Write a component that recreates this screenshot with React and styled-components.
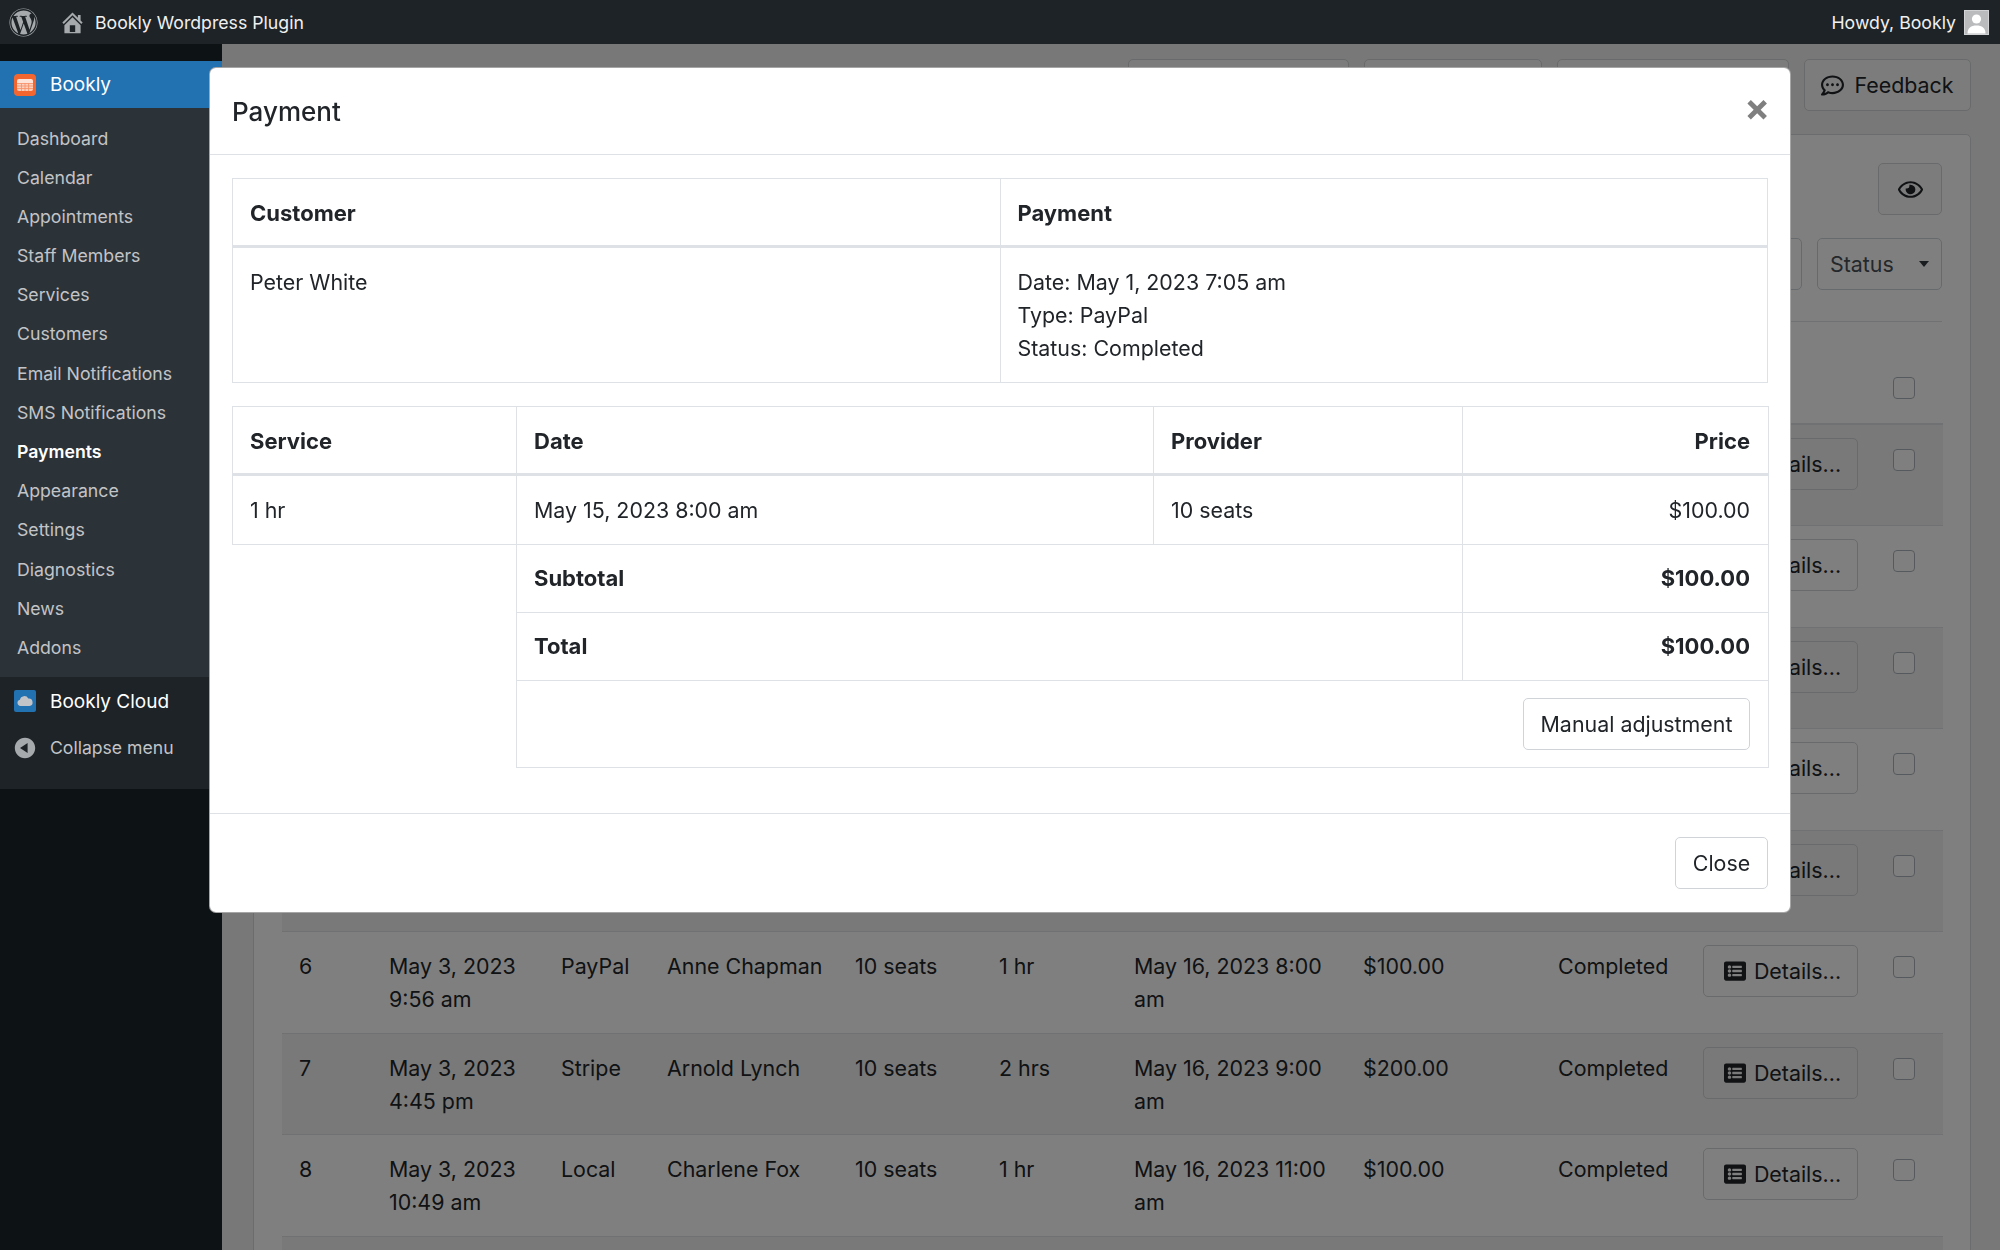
import React from "react";
import styled, { createGlobalStyle } from "styled-components";
import { FaWordpress, FaRegEye, FaRegCommentDots, FaListAlt } from "react-icons/fa";

const FONT = `Inter, "Liberation Sans", sans-serif`;
const TEXT = "#212529";
const LINE = "#dee2e6";

const Global = createGlobalStyle`
  html, body {
    margin: 0;
    width: 2000px;
    height: 1250px;
    overflow: hidden;
    background: #f0f0f1;
    font-family: ${FONT};
    color: ${TEXT};
  }
  * { box-sizing: border-box; }
`;

const Shell = styled.div`
  width: 2000px;
  height: 1250px;
  display: flex;
  flex-direction: column;
  overflow: hidden;
`;

const AdminBar = styled.header`
  flex: 0 0 44px;
  display: flex;
  align-items: center;
  padding: 0 11px 0 9px;
  background: #1d2327;
  color: #f0f0f1;
  font-size: 17.7px;
  position: relative;
  z-index: 3;
`;

const BarIcon = styled.span`
  display: flex;
  color: #a7aaad;
  margin-right: ${(p) => p.$gap}px;
`;

const Howdy = styled.span`
  margin-left: auto;
  margin-right: 8px;
`;

const Columns = styled.div`
  flex: 1;
  display: flex;
  min-height: 0;
`;

const Sidebar = styled.nav`
  flex: 0 0 222px;
  padding-top: 17px;
  background: #0d1214;
  position: relative;
  z-index: 2;
`;

const TopItem = styled.div`
  height: ${(p) => (p.$muted ? 46 : 47)}px;
  display: flex;
  align-items: center;
  gap: 14px;
  padding-left: 14px;
  font-size: ${(p) => (p.$muted ? "17.6px" : "19px")};
  color: ${(p) => (p.$muted ? "#c3c4c7" : "#fff")};
  background: ${(p) => (p.$active ? "#2271b1" : "transparent")};
`;

const SubMenu = styled.ul`
  list-style: none;
  margin: 0;
  padding: 10.5px 0 9.5px;
  background: #2c3338;
`;

const SubItem = styled.li`
  height: 39.2px;
  line-height: 39.2px;
  padding-left: 17px;
  font-size: 17.7px;
  color: ${(p) => (p.$current ? "#fff" : "#c3c4c7")};
  font-weight: ${(p) => (p.$current ? 600 : 400)};
`;

const CloudBlock = styled.div`
  background: #1d2327;
  padding: 1px 0 18px;
`;

const Main = styled.main`
  flex: 1;
  min-width: 0;
  padding: 15px 29px 0 31px;
  background: #f0f0f1;
`;

const PageHead = styled.div`
  display: flex;
  justify-content: flex-end;
  gap: 15px;
  margin-bottom: 23px;
`;

const Button = styled.button`
  height: 52px;
  display: inline-flex;
  align-items: center;
  justify-content: center;
  gap: ${(p) => p.$gap || 10}px;
  padding: 0 18px;
  background: #fff;
  border: 1px solid #d0d4d8;
  border-radius: 5px;
  font-family: ${FONT};
  font-size: 21.4px;
  color: ${TEXT};
  white-space: nowrap;

  svg {
    flex: none;
  }
`;

const HeadButton = styled(Button)`
  width: ${(p) => p.$w}px;
  padding: 0;
  background: #f8f9fa;
  flex: none;
`;

const Card = styled.section`
  height: 1200px;
  padding: 28px 28px 0 28px;
  background: #fff;
  border: 1px solid #d5d8db;
  border-radius: 5px 5px 0 0;
`;

const EyeRow = styled.div`
  display: flex;
  justify-content: flex-end;
  margin-bottom: 23px;
`;

const EyeButton = styled(Button)`
  width: 64px;
  padding: 0;
  font-size: 25px;
  background: #f8f9fa;
`;

const Filters = styled.div`
  display: flex;
  justify-content: flex-end;
  gap: 15px;
  padding-bottom: 31px;
  border-bottom: 1px solid ${LINE};
`;

const FilterBox = styled.div`
  width: ${(p) => p.$w}px;
  height: 52px;
  display: flex;
  align-items: center;
  justify-content: space-between;
  padding: 0 12px;
  background: #fff;
  border: 1px solid #ced4da;
  border-radius: 5px;
  font-size: 21.4px;
  color: #495057;
`;

const Caret = styled.i`
  width: 0;
  height: 0;
  border-left: 5px solid transparent;
  border-right: 5px solid transparent;
  border-top: 6px solid #343a40;
`;

const DataTable = styled.table`
  width: 1661px;
  table-layout: fixed;
  border-collapse: collapse;
  font-size: 21.4px;

  th {
    height: 102px;
    padding: 0 17px 24px;
    text-align: left;
    vertical-align: bottom;
    font-weight: 700;
    border-bottom: 2px solid ${LINE};
  }

  td {
    height: 101.55px;
    padding: 18px 8px 0 17px;
    line-height: 33px;
    vertical-align: top;
    border-bottom: 1px solid ${LINE};
  }

  tbody tr:nth-child(odd) td {
    background: #f2f2f2;
  }
`;

const DetailsButton = styled(Button)`
  width: 155px;
  margin-top: -5px;
  padding: 0 0 0 4px;
  background: transparent;
  vertical-align: top;
`;

const Check = styled.span`
  display: block;
  width: 22px;
  height: 22px;
  margin-top: ${(p) => (p.$head ? 0 : 6)}px;
  border: 1px solid #adb5bd;
  border-radius: 4px;
  background: #fff;
`;

const Backdrop = styled.div`
  position: fixed;
  inset: 44px 0 0 222px;
  background: rgba(0, 0, 0, 0.5);
  z-index: 1;
`;

const Modal = styled.div`
  position: fixed;
  left: 209px;
  top: 67px;
  width: 1582px;
  background: #fff;
  border: 1px solid rgba(0, 0, 0, 0.35);
  border-radius: 7px;
  z-index: 4;
`;

const ModalHead = styled.div`
  height: 87px;
  display: flex;
  align-items: center;
  justify-content: space-between;
  padding: 0 20px 0 22px;
  border-bottom: 1px solid ${LINE};
`;

const ModalTitle = styled.h5`
  margin: 0;
  font-size: 26px;
  font-weight: 500;
`;

const CloseX = styled.span`
  font-size: 38px;
  line-height: 1;
  font-weight: 700;
  color: #7f7f7f;
  margin-top: -8px;
`;

const ModalBody = styled.div`
  padding: 23px 22px 45px;
  display: flex;
  flex-direction: column;
  gap: 23px;
`;

const InfoTable = styled.table`
  width: 1536px;
  table-layout: fixed;
  border-collapse: collapse;
  font-size: 21.4px;
  line-height: 33px;

  th, td {
    padding: 17px;
    border: 1px solid ${LINE};
    text-align: left;
    vertical-align: top;
  }

  th {
    padding: 18px 17px 15px;
    font-size: 22px;
    font-weight: 700;
    border-bottom-width: 3px;
  }

  tbody tr:first-child td {
    padding-top: 18px;
    padding-bottom: 17px;
  }

  b {
    font-size: 22px;
  }

  th.num, td.num {
    padding-right: 18px;
    text-align: right;
  }

  td.blank {
    border: 0;
  }
`;

const ModalFoot = styled.div`
  display: flex;
  justify-content: flex-end;
  padding: 23px 22px;
  border-top: 1px solid ${LINE};
`;

const PlainButton = styled(Button)`
  width: ${(p) => p.$w}px;
  padding: 0;
  background: #fff;
`;

const Adjust = styled.div`
  display: flex;
  justify-content: flex-end;
`;

const menu = [
  "Dashboard", "Calendar", "Appointments", "Staff Members", "Services",
  "Customers", "Email Notifications", "SMS Notifications", "Payments",
  "Appearance", "Settings", "Diagnostics", "News", "Addons",
];

const rows = [
  [1, "May 1, 2023 7:05 am", "PayPal", "Peter White", "10 seats", "1 hr", "May 15, 2023 8:00 am", "$100.00"],
  [2, "May 1, 2023 9:14 am", "Stripe", "Nancy Clark", "10 seats", "1 hr", "May 15, 2023 9:00 am", "$100.00"],
  [3, "May 2, 2023 8:21 am", "Local", "Ruth Mills", "10 seats", "2 hrs", "May 15, 2023 11:00 am", "$200.00"],
  [4, "May 2, 2023 1:37 pm", "PayPal", "Adam Reed", "10 seats", "1 hr", "May 15, 2023 2:00 pm", "$100.00"],
  [5, "May 2, 2023 6:02 pm", "Stripe", "Laura Bell", "10 seats", "1 hr", "May 15, 2023 3:00 pm", "$100.00"],
  [6, "May 3, 2023 9:56 am", "PayPal", "Anne Chapman", "10 seats", "1 hr", "May 16, 2023 8:00 am", "$100.00"],
  [7, "May 3, 2023 4:45 pm", "Stripe", "Arnold Lynch", "10 seats", "2 hrs", "May 16, 2023 9:00 am", "$200.00"],
  [8, "May 3, 2023 10:49 am", "Local", "Charlene Fox", "10 seats", "1 hr", "May 16, 2023 11:00 am", "$100.00"],
  [9, "May 4, 2023 8:12 am", "PayPal", "Emily Stone", "10 seats", "1 hr", "May 16, 2023 1:00 pm", "$100.00"],
];

const widths = [90, 172, 106, 188, 144, 135, 229, 195, 145, 190, 67];

function HomeIcon() {
  return (
    <svg width="27" height="27" viewBox="0 0 20 20" fill="currentColor">
      <path d="M16 8.5l1.53 1.53-1.06 1.06L10 4.62l-6.47 6.47-1.06-1.06L10 2.5l4 4v-2h2v4zm-6-2.46l6 5.99V18H4v-5.97zM12 17v-5H8v5h4z" />
    </svg>
  );
}

function Avatar() {
  return (
    <svg width="25" height="25" viewBox="0 0 25 25">
      <rect x="0.5" y="0.5" width="24" height="24" fill="#b9bbbd" stroke="#d2d3d4" />
      <circle cx="12.5" cy="9" r="4.6" fill="#fff" />
      <path d="M3.5 23.5c0-5.5 3.5-8 9-8s9 2.500 9 8z" fill="#fff" />
    </svg>
  );
}

function BooklyIcon() {
  return (
    <svg width="22" height="22" viewBox="0 0 22 22">
      <rect width="22" height="22" rx="4" fill="#f4662f" />
      <path d="M3 7a2 2 0 0 1 2-2h12a2 2 0 0 1 2 2v2H3z" fill="#fde3d8" />
      <path d="M3 9.500h16V15a2 2 0 0 1-2 2H5a2 2 0 0 1-2-2z" fill="#fcd0bd" />
      <path d="M3 12h16M3 14.500h16M7.500 9.500V17M11 9.500V17M14.500 9.500V17" stroke="#f78f66" strokeWidth="0.8" />
    </svg>
  );
}

function CloudIcon() {
  return (
    <svg width="22" height="22" viewBox="0 0 22 22">
      <rect width="22" height="22" rx="2" fill="#2271b1" />
      <path d="M6.500 16a3.200 3.200 0 0 1-.6-6.300A4.500 4.500 0 0 1 14.300 8.500 3.800 3.800 0 0 1 15.500 16z" fill="#c3c4c7" />
    </svg>
  );
}

function CollapseIcon() {
  return (
    <svg width="26" height="26" viewBox="0 0 20 20" fill="#a7aaad" style={{ margin: "0 -2px" }}>
      <path d="M10 2.160c4.330 0 7.840 3.510 7.840 7.840s-3.510 7.840-7.840 7.840S2.160 14.330 2.160 10 5.710 2.160 10 2.160zm2 11.720V6.120L6.180 9.970z" />
    </svg>
  );
}

export default function App() {
  return (
    <Shell>
      <Global />
      <AdminBar>
        <BarIcon $gap={21}><FaWordpress size={29} /></BarIcon>
        <BarIcon $gap={9}><HomeIcon /></BarIcon>
        <span>Bookly Wordpress Plugin</span>
        <Howdy>Howdy, Bookly</Howdy>
        <Avatar />
      </AdminBar>

      <Columns>
        <Sidebar>
          <TopItem $active><BooklyIcon />Bookly</TopItem>
          <SubMenu>
            {menu.map((m) => (
              <SubItem key={m} $current={m === "Payments"}>{m}</SubItem>
            ))}
          </SubMenu>
          <CloudBlock>
            <TopItem><CloudIcon />Bookly Cloud</TopItem>
            <TopItem $muted><CollapseIcon />Collapse menu</TopItem>
          </CloudBlock>
        </Sidebar>

        <Main>
          <PageHead>
            <HeadButton $w={221}>Documentation</HeadButton>
            <HeadButton $w={178}>Contact Us</HeadButton>
            <HeadButton $w={232}>Feature requests</HeadButton>
            <HeadButton $w={167}><FaRegCommentDots size={23} />Feedback</HeadButton>
          </PageHead>
          <Card>
            <EyeRow>
              <EyeButton><FaRegEye /></EyeButton>
            </EyeRow>
            <Filters>
              <FilterBox $w={150}>Type</FilterBox>
              <FilterBox $w={200}>Customer</FilterBox>
              <FilterBox $w={200}>Provider</FilterBox>
              <FilterBox $w={200}>Service</FilterBox>
              <FilterBox $w={125}>Status<Caret /></FilterBox>
            </Filters>
            <DataTable>
              <colgroup>
                {widths.map((w, i) => <col key={i} style={{ width: w }} />)}
              </colgroup>
              <thead>
                <tr>
                  <th>No.</th>
                  <th>Date</th>
                  <th>Type</th>
                  <th>Customer</th>
                  <th>Provider</th>
                  <th>Service</th>
                  <th>Appointment Date</th>
                  <th>Amount</th>
                  <th>Status</th>
                  <th />
                  <th><Check $head /></th>
                </tr>
              </thead>
              <tbody>
                {rows.map((r) => (
                  <tr key={r[0]}>
                    {r.map((c, i) => <td key={i}>{c}</td>)}
                    <td>Completed</td>
                    <td>
                      <DetailsButton $gap={8}><FaListAlt size={22} />Details...</DetailsButton>
                    </td>
                    <td><Check /></td>
                  </tr>
                ))}
              </tbody>
            </DataTable>
          </Card>
        </Main>
      </Columns>

      <Backdrop />

      <Modal>
        <ModalHead>
          <ModalTitle>Payment</ModalTitle>
          <CloseX>×</CloseX>
        </ModalHead>
        <ModalBody>
          <InfoTable>
            <thead>
              <tr>
                <th>Customer</th>
                <th>Payment</th>
              </tr>
            </thead>
            <tbody>
              <tr>
                <td>Peter White</td>
                <td>
                  Date: May 1, 2023 7:05 am<br />
                  Type: PayPal<br />
                  Status: Completed
                </td>
              </tr>
            </tbody>
          </InfoTable>
          <InfoTable>
            <colgroup>
              <col style={{ width: 284 }} />
              <col style={{ width: 637 }} />
              <col style={{ width: 309 }} />
              <col style={{ width: 306 }} />
            </colgroup>
            <thead>
              <tr>
                <th>Service</th>
                <th>Date</th>
                <th>Provider</th>
                <th className="num">Price</th>
              </tr>
            </thead>
            <tbody>
              <tr>
                <td>1 hr</td>
                <td>May 15, 2023 8:00 am</td>
                <td>10 seats</td>
                <td className="num">$100.00</td>
              </tr>
              <tr>
                <td className="blank" rowSpan={3} />
                <td colSpan={2}><b>Subtotal</b></td>
                <td className="num"><b>$100.00</b></td>
              </tr>
              <tr>
                <td colSpan={2}><b>Total</b></td>
                <td className="num"><b>$100.00</b></td>
              </tr>
              <tr>
                <td colSpan={3} className="num">
                  <Adjust><PlainButton $w={227}>Manual adjustment</PlainButton></Adjust>
                </td>
              </tr>
            </tbody>
          </InfoTable>
        </ModalBody>
        <ModalFoot>
          <PlainButton $w={93}>Close</PlainButton>
        </ModalFoot>
      </Modal>
    </Shell>
  );
}
